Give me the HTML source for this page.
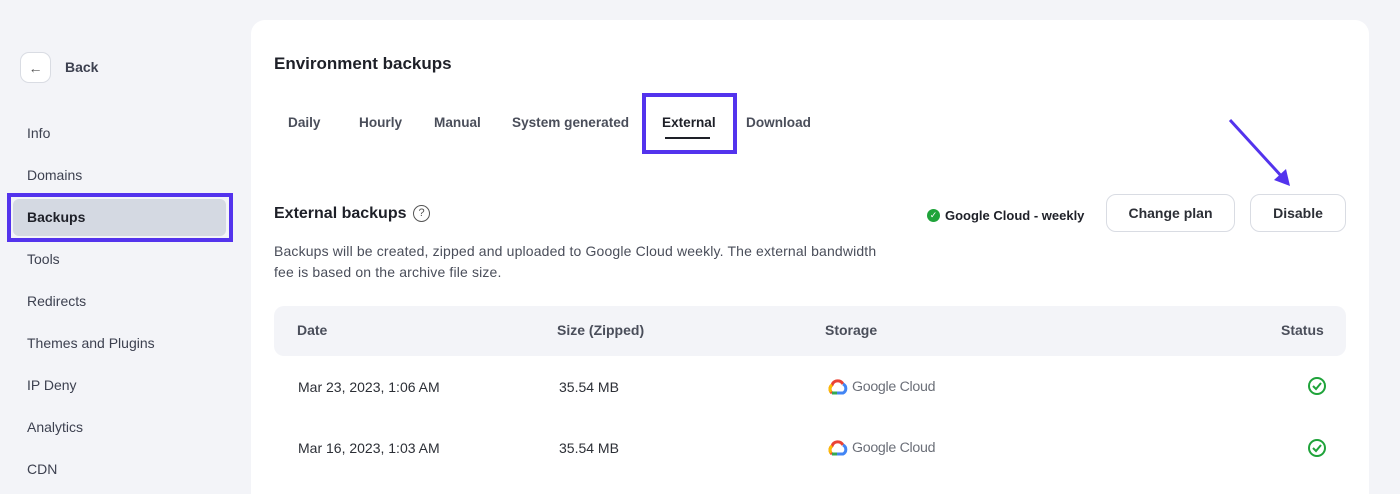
<!DOCTYPE html>
<html><head><style>
*{margin:0;padding:0;box-sizing:border-box}
html,body{width:1400px;height:494px;overflow:hidden}
body{background:#f3f4f8;font-family:"Liberation Sans",sans-serif;color:#2c2f36;position:relative}
.a{position:absolute;white-space:nowrap}
.nav{left:27px;font-size:14px;color:#3d4150}
.tab{top:115px;font-size:13.6px;color:#4a4e5a;font-weight:bold}
.btn{position:absolute;background:#fff;border:1px solid #d9dce3;border-radius:10px;font-size:14px;font-weight:bold;color:#2c2f36;display:flex;align-items:center;justify-content:center}
.th{top:322px;font-size:14px;color:#4a4e5a;font-weight:bold}
.td{font-size:14px;color:#2c2f36}
.gc{font-size:14.2px;color:#6b6f78;letter-spacing:-0.3px}
</style></head><body>
<div class="btn" style="left:20px;top:52px;width:31px;height:31px;border-radius:9px;font-weight:normal;color:#555">←</div>
<div class="a" style="left:65px;top:59px;font-size:14px;color:#3d4150;font-weight:bold">Back</div>
<div class="a nav" style="top:125px">Info</div>
<div class="a nav" style="top:167px">Domains</div>
<div class="a" style="left:7px;top:193px;width:226px;height:49px;border:4px solid #5333ed"></div>
<div class="a" style="left:13px;top:199px;width:213px;height:37px;background:#d4d9e2;border-radius:6px"></div>
<div class="a nav" style="top:209px;font-weight:bold;color:#1e2028">Backups</div>
<div class="a nav" style="top:251px">Tools</div>
<div class="a nav" style="top:293px">Redirects</div>
<div class="a nav" style="top:335px">Themes and Plugins</div>
<div class="a nav" style="top:377px">IP Deny</div>
<div class="a nav" style="top:419px">Analytics</div>
<div class="a nav" style="top:461px">CDN</div>

<div class="a" style="left:251px;top:20px;width:1118px;height:474px;background:#fff;border-radius:14px 14px 0 0"></div>
<div class="a" style="left:274px;top:54px;font-size:17px;font-weight:bold;color:#1e2028">Environment backups</div>
<div class="a tab" style="left:288px">Daily</div>
<div class="a tab" style="left:359px">Hourly</div>
<div class="a tab" style="left:434px">Manual</div>
<div class="a tab" style="left:512px">System generated</div>
<div class="a tab" style="left:662px;color:#1e2028">External</div>
<div class="a tab" style="left:746px">Download</div>
<div class="a" style="left:665px;top:137px;width:45px;height:2px;background:#1e2028"></div>
<div class="a" style="left:642px;top:93px;width:95px;height:61px;border:4px solid #5333ed"></div>

<div class="a" style="left:274px;top:205px;font-size:16px;font-weight:bold;color:#1e2028">External backups</div>
<div class="a" style="left:413px;top:205px;width:17px;height:17px;border:1.5px solid #555;border-radius:50%;font-size:11px;text-align:center;line-height:14px;color:#555">?</div>
<div class="a" style="left:274px;top:241px;font-size:14px;letter-spacing:0.15px;color:#4a4e5a;line-height:21px;white-space:normal;width:620px">Backups will be created, zipped and uploaded to Google Cloud weekly. The external bandwidth fee is based on the archive file size.</div>

<div class="a" style="left:927px;top:209px;width:13px;height:13px;border-radius:50%;background:#1fa33a;color:#fff;font-size:9px;text-align:center;line-height:13px">✓</div>
<div class="a" style="left:945px;top:208px;font-size:13px;font-weight:bold;color:#1e2028">Google Cloud - weekly</div>
<div class="btn" style="left:1106px;top:194px;width:129px;height:38px">Change plan</div>
<div class="btn" style="left:1250px;top:194px;width:96px;height:38px">Disable</div>
<svg class="a" style="left:1222px;top:112px" width="80" height="80"><line x1="8" y1="8" x2="62" y2="67" stroke="#5333ed" stroke-width="3"/><polygon points="68,74 52,68 64,57" fill="#5333ed"/></svg>

<div class="a" style="left:274px;top:306px;width:1072px;height:50px;background:#f3f4f8;border-radius:10px"></div>
<div class="a th" style="left:297px">Date</div>
<div class="a th" style="left:557px">Size (Zipped)</div>
<div class="a th" style="left:825px">Storage</div>
<div class="a th" style="left:1281px">Status</div>

<div class="a td" style="left:298px;top:379px">Mar 23, 2023, 1:06 AM</div>
<div class="a td" style="left:559px;top:379px">35.54 MB</div>
<div class="a td" style="left:298px;top:440px">Mar 16, 2023, 1:03 AM</div>
<div class="a td" style="left:559px;top:440px">35.54 MB</div>

<svg class="a" style="left:827px;top:379px" width="22" height="16" viewBox="0 0 22 16"><path d="M5 14 A5 5 0 0 1 5 6 A6 6 0 0 1 16 5" fill="none" stroke="#ea4335" stroke-width="3"/><path d="M16 5 A5 5 0 0 1 16 14 H10" fill="none" stroke="#4285f4" stroke-width="3"/><path d="M5 14 H10" stroke="#34a853" stroke-width="3"/><path d="M5 6 A5 5 0 0 0 4 13" fill="none" stroke="#fbbc05" stroke-width="3"/></svg>
<div class="a gc" style="left:852px;top:379px">Google Cloud</div>
<svg class="a" style="left:827px;top:440px" width="22" height="16" viewBox="0 0 22 16"><path d="M5 14 A5 5 0 0 1 5 6 A6 6 0 0 1 16 5" fill="none" stroke="#ea4335" stroke-width="3"/><path d="M16 5 A5 5 0 0 1 16 14 H10" fill="none" stroke="#4285f4" stroke-width="3"/><path d="M5 14 H10" stroke="#34a853" stroke-width="3"/><path d="M5 6 A5 5 0 0 0 4 13" fill="none" stroke="#fbbc05" stroke-width="3"/></svg>
<div class="a gc" style="left:852px;top:440px">Google Cloud</div>

<svg class="a" style="left:1307px;top:376px" width="20" height="20"><circle cx="10" cy="10" r="8" fill="none" stroke="#1fa33a" stroke-width="2"/><path d="M6 10 L9 13 L14 7" fill="none" stroke="#1fa33a" stroke-width="2"/></svg>
<svg class="a" style="left:1307px;top:438px" width="20" height="20"><circle cx="10" cy="10" r="8" fill="none" stroke="#1fa33a" stroke-width="2"/><path d="M6 10 L9 13 L14 7" fill="none" stroke="#1fa33a" stroke-width="2"/></svg>
</body></html>
